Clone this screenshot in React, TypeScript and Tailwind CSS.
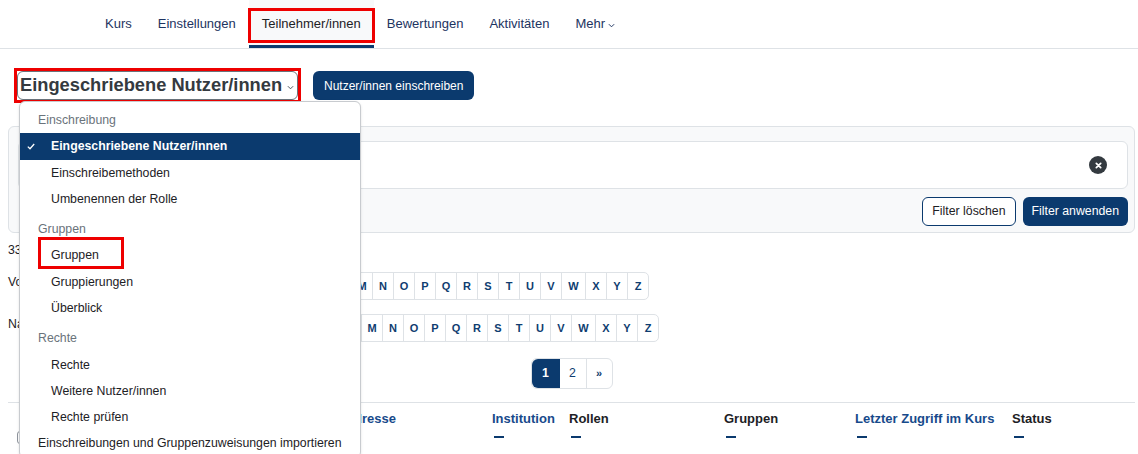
// Teilnehmer/innen-Seite (Moodle) mit geöffnetem Auswahlmenü
// Hintergrund: Navigation, Filterbereich, Initialen-Leisten, Tabellenkopf.
// Darüber liegt das aufgeklappte Menü der Seitenauswahl.

const NAVY = 'bg-[#0b3a6e]';

const navItems = ['Kurs', 'Einstellungen', 'Teilnehmer/innen', 'Bewertungen', 'Aktivitäten'];

const letters = 'ABCDEFGHIJKLMNOPQRSTUVWXYZ'.split('');

type MenuRow =
  | { kind: 'header'; label: string; gapTop?: boolean }
  | { kind: 'item'; label: string; selected?: boolean; marked?: boolean; flat?: boolean };

const menuRows: MenuRow[] = [
  { kind: 'header', label: 'Einschreibung' },
  { kind: 'item', label: 'Eingeschriebene Nutzer/innen', selected: true },
  { kind: 'item', label: 'Einschreibemethoden' },
  { kind: 'item', label: 'Umbenennen der Rolle' },
  { kind: 'header', label: 'Gruppen', gapTop: true },
  { kind: 'item', label: 'Gruppen', marked: true },
  { kind: 'item', label: 'Gruppierungen' },
  { kind: 'item', label: 'Überblick' },
  { kind: 'header', label: 'Rechte', gapTop: true },
  { kind: 'item', label: 'Rechte' },
  { kind: 'item', label: 'Weitere Nutzer/innen' },
  { kind: 'item', label: 'Rechte prüfen' },
  { kind: 'item', label: 'Einschreibungen und Gruppenzuweisungen importieren', flat: true },
];

function Chevron({ className }: { className?: string }) {
  return (
    <svg className={className} viewBox="0 0 8 5" fill="none" stroke="currentColor" strokeWidth={1.1}>
      <path d="M1 1l3 3 3-3" />
    </svg>
  );
}

function InitialBar({ label, labelWidth }: { label: string; labelWidth: string }) {
  return (
    <div className="flex items-start">
      <span className={`${labelWidth} mt-[3px] text-[12.3px] leading-[14px] text-[#1d2125]`}>{label}</span>
      <div className="flex h-[28px] rounded-[5px] border border-[#dee2e6] bg-[#0b3a6e] text-[11px] font-bold text-white">
        <span className="flex w-[31px] items-center justify-center">Alle</span>
      </div>
      <div className="ml-px flex h-[28px] rounded-[5px] border border-[#dee2e6] bg-white text-[11px] font-bold text-[#0f3d70]">
        {letters.map((l, i) => (
          <span
            key={l}
            className={`flex items-center justify-center ${l === 'W' ? 'w-[24px]' : 'w-[21px]'} ${
              i > 0 ? 'border-l border-[#dee2e6]' : ''
            }`}
          >
            {l}
          </span>
        ))}
      </div>
    </div>
  );
}

export default function App() {
  return (
    <div className="relative h-[454px] w-[1138px] overflow-hidden bg-white font-['Liberation_Sans',Arial,sans-serif] text-[#1d2125]">
      {/* Sekundärnavigation */}
      <nav className="flex h-[49px] border-b border-[#dee2e6] pl-[92px] text-[13px]">
        {navItems.map((item) =>
          item === 'Teilnehmer/innen' ? (
            <div
              key={item}
              className="relative flex h-[48px] items-center border-b-[3px] border-[#0b3a6e] bg-[#f8f9fa] px-[13px] pt-[3px] text-[#1d2125]"
            >
              {item}
              <span className="absolute left-[-1px] right-[-1px] top-[8px] h-[35px] border-[3px] border-[#ee0000]" />
            </div>
          ) : (
            <div key={item} className="flex h-[48px] items-center px-[13px] text-[#1d3461]">
              {item}
            </div>
          )
        )}
        <div className="flex h-[48px] items-center gap-[3px] px-[13px] text-[#1d3461]">
          Mehr
          <Chevron className="mt-[2px] h-[5px] w-[7px]" />
        </div>
      </nav>

      <main className="pl-[8px] pr-[3px]">
        {/* Seitentitel mit Auswahl + Button */}
        <div className="mt-[19px] flex items-center gap-[12px] pl-[6px]">
          <div className="border-[3px] border-[#ee0000]">
            <div className="flex h-[29px] w-[281px] items-center justify-between rounded-[6px] border border-[#6a737b] pl-[2px] pr-[3px]">
              <span className="text-[18.3px] font-bold leading-none text-[#343a40]">Eingeschriebene Nutzer/innen</span>
              <Chevron className="mt-[4px] h-[5px] w-[7px] text-[#495057]" />
            </div>
          </div>
          <button className={`h-[29px] rounded-[6px] ${NAVY} px-[11px] text-[12px] text-white`}>
            Nutzer/innen einschreiben
          </button>
        </div>

        {/* Filterbereich */}
        <div className="mt-[23px] rounded-[6px] border border-[#dee2e6] bg-[#f8f9fa] pb-[6px] pl-[9px] pr-[6px] pt-[14px]">
          <div className="flex h-[48px] items-center justify-end rounded-[6px] border border-[#dee2e6] bg-white pr-[20px]">
            <span className="flex h-[18px] w-[18px] items-center justify-center rounded-full bg-[#343a40]">
              <svg className="h-[7px] w-[7px]" viewBox="0 0 8 8" stroke="white" strokeWidth={2} strokeLinecap="round">
                <path d="M1.5 1.5l5 5M6.5 1.5l-5 5" />
              </svg>
            </span>
          </div>
          <div className="mt-[8px] flex justify-end gap-[7px] text-[12.3px]">
            <button className="h-[29px] rounded-[6px] border border-[#0b3a6e] bg-white px-[9px] text-[#1d2125]">
              Filter löschen
            </button>
            <button className={`h-[29px] rounded-[6px] ${NAVY} px-[9px] text-white`}>Filter anwenden</button>
          </div>
        </div>

        <p className="mt-[10px] text-[12.3px] leading-[14px]">33 Teilnehmer/innen gefunden</p>

        {/* Initialen-Leisten */}
        <div className="mt-[15px]">
          <InitialBar label="Vorname" labelWidth="w-[56px]" />
        </div>
        <div className="mt-[14px]">
          <InitialBar label="Nachname" labelWidth="w-[66px]" />
        </div>

        {/* Seitennavigation */}
        <div className="mt-[16px] flex justify-center">
          <div className="flex h-[31px] rounded-[6px] border border-[#dee2e6] text-[12.3px]">
            <span className={`flex w-[28px] items-center justify-center rounded-l-[6px] ${NAVY} font-bold text-white`}>1</span>
            <span className="flex w-[27px] items-center justify-center border-r border-[#dee2e6] text-[#0f3d70]">2</span>
            <span className="flex w-[25px] items-center justify-center text-[11px] font-bold text-[#0f3d70]">»</span>
          </div>
        </div>

        {/* Tabellenkopf */}
        <div className="mt-[13px] grid grid-cols-[32px_262px_190px_77px_155px_131px_157px_1fr] border-t border-[#dee2e6] pt-[8px] text-[13px] font-bold leading-[15px]">
          <div className="pl-[9px]">
            <span className="mt-[20px] block h-[13px] w-[13px] rounded-[3px] border border-[#8f959e] bg-white" />
          </div>
          {[
            { t: 'Vorname / Nachname', link: true },
            { t: 'E-Mail-Adresse', link: true },
            { t: 'Institution', link: true },
            { t: 'Rollen', link: false },
            { t: 'Gruppen', link: false },
            { t: 'Letzter Zugriff im Kurs', link: true },
            { t: 'Status', link: false },
          ].map((c) => (
            <div key={c.t}>
              <span className={c.link ? 'text-[#174a8b]' : 'text-[#1d2125]'}>{c.t}</span>
              <span className={`ml-[2px] mt-[10px] block h-[2px] w-[10px] ${NAVY}`} />
            </div>
          ))}
        </div>
      </main>

      {/* Aufgeklapptes Auswahlmenü */}
      <div className="absolute left-[19px] top-[101px] w-[342px] rounded-[6px] border border-[#c8cbcf] bg-white pt-[5px] text-[12.3px] shadow-sm">
        {menuRows.map((row, i) =>
          row.kind === 'header' ? (
            <div
              key={i}
              className={`flex h-[26.3px] items-center pl-[18px] text-[#6a737b] ${row.gapTop ? 'mt-[4px]' : ''}`}
            >
              {row.label}
            </div>
          ) : (
            <div
              key={i}
              className={`relative flex h-[26.3px] items-center ${row.flat ? 'pl-[18px]' : 'pl-[31px]'} ${
                row.selected ? 'bg-[#0b3a6e] font-bold text-white' : 'text-[#1d2125]'
              }`}
            >
              {row.selected && (
                <svg className="absolute left-[7px] h-[7px] w-[8px]" viewBox="0 0 8 7" fill="none" stroke="white" strokeWidth={1.3}>
                  <path d="M0.8 3.6l2.2 2.2L7.2 1" />
                </svg>
              )}
              {row.label}
              {row.marked && (
                <span className="absolute left-[18px] top-[-5px] h-[32px] w-[86px] border-[3px] border-[#ee0000]" />
              )}
            </div>
          )
        )}
      </div>
    </div>
  );
}
